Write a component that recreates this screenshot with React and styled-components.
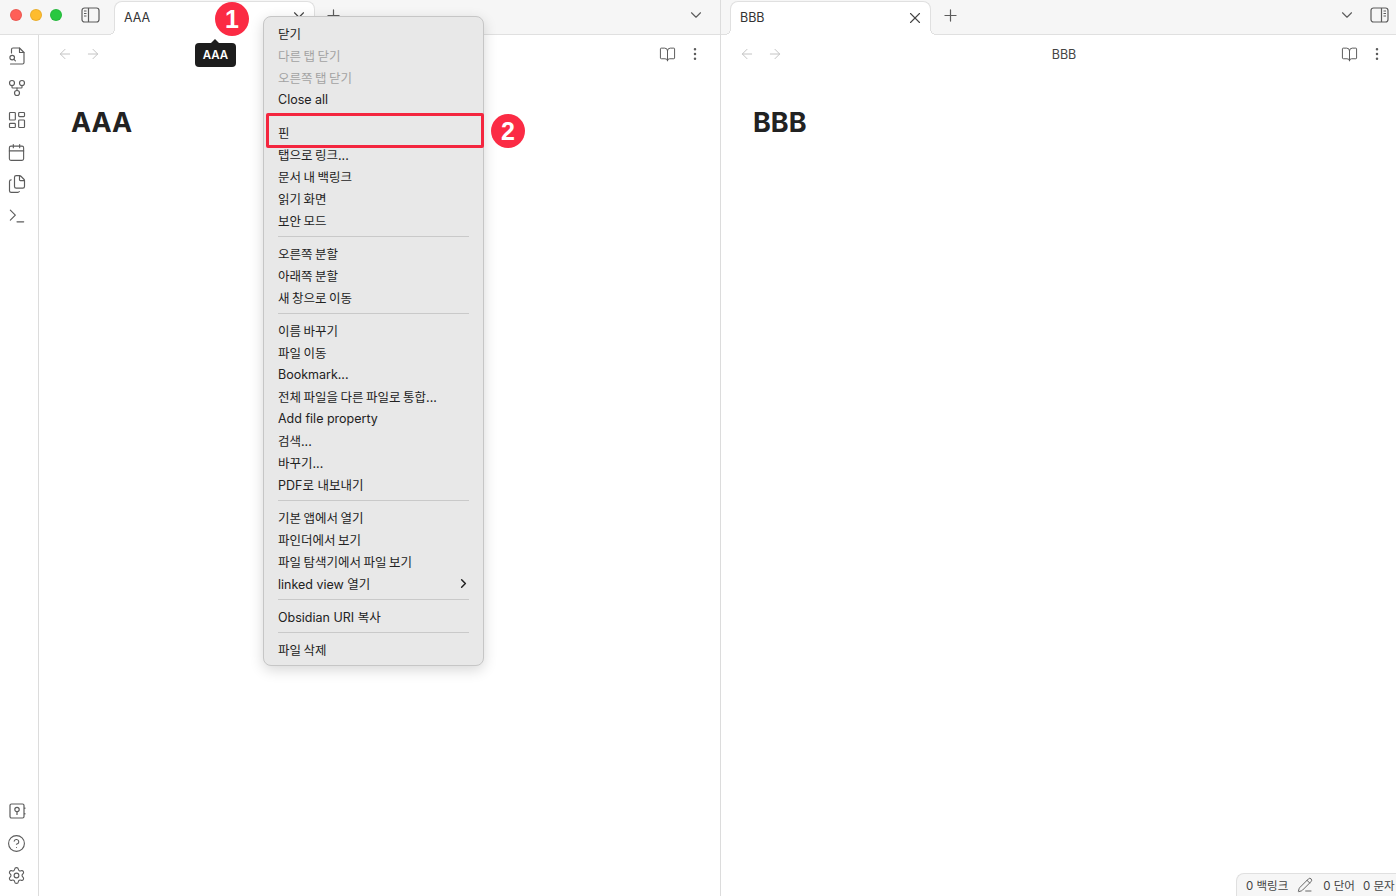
import React from 'react'
import styled, { createGlobalStyle } from 'styled-components'
import {
  ArrowLeft, ArrowRight, BookOpen, Calendar, ChevronDown, ChevronRight, CircleHelp,
  EllipsisVertical, Files, GitFork, LayoutDashboard, PencilLine, Plus,
  Settings, Terminal, X,
} from 'lucide-react'

const GlobalStyle = createGlobalStyle`
  html, body {
    margin: 0;
    height: 100%;
    overflow: hidden;
    background: #fff;
  }
  #root {
    height: 100%;
  }
  * {
    box-sizing: border-box;
  }
`

const Workspace = styled.div`
  position: relative;
  display: flex;
  height: 100%;
  color: #222;
  font-family: Inter, "Noto Sans CJK KR", sans-serif;
  font-size: 13px;
`
const Pane = styled.section`
  display: flex;
  flex-direction: column;
  width: ${({ $width }) => $width || 'auto'};
  flex: ${({ $width }) => ($width ? 'none' : 1)};
  border-right: ${({ $width }) => ($width ? '1px solid #dcdcdc' : 'none')};
`
const TabBar = styled.header`
  display: flex;
  align-items: flex-end;
  flex: none;
  height: 35px;
  padding-left: ${({ $inset }) => $inset || 0}px;
  background: #f6f6f6;
  border-bottom: 1px solid #e0e0e0;
`
const Traffic = styled.div`
  display: flex;
  align-items: center;
  align-self: center;
  gap: 8px;
  margin: -4px 0 0 10px;
`
const Light = styled.span`
  width: 12px;
  height: 12px;
  border-radius: 50%;
  background: ${({ $color }) => $color};
  border: 1px solid rgba(0, 0, 0, 0.08);
`
const BarIcon = styled.button`
  display: flex;
  align-items: center;
  justify-content: center;
  flex: none;
  align-self: center;
  width: ${({ $size }) => $size || 28}px;
  height: 28px;
  margin: -4px ${({ $end }) => $end || 0}px 0 ${({ $gap }) => $gap || 0}px;
  padding: 0;
  border: 0;
  background: none;
  color: #5c5c5c;
`
const Tab = styled.div`
  position: relative;
  display: flex;
  align-items: center;
  justify-content: space-between;
  flex: none;
  width: 201px;
  height: 34px;
  margin: 0 0 -1px ${({ $gap }) => $gap || 0}px;
  padding: 0 6px 2px 9px;
  background: #fff;
  border: 1px solid #e0e0e0;
  border-bottom: 0;
  border-radius: 8px 8px 0 0;
  font-size: 12.5px;
  color: #333;
  &::before,
  &::after {
    content: '';
    position: absolute;
    bottom: 0;
    width: 6px;
    height: 6px;
  }
  &::before {
    left: -6px;
    background: radial-gradient(circle at 0 0, transparent 5px, #e0e0e0 5px, #e0e0e0 6px, #fff 6px);
  }
  &::after {
    right: -6px;
    background: radial-gradient(circle at 100% 0, transparent 5px, #e0e0e0 5px, #e0e0e0 6px, #fff 6px);
  }
`
const TabAction = styled.span`
  display: flex;
  margin-top: ${({ $raised }) => ($raised ? -5 : 0)}px;
  color: #444;
`
const Spacer = styled.div`
  flex: 1;
`
const Body = styled.div`
  display: flex;
  flex: 1;
  min-height: 0;
`
const Ribbon = styled.nav`
  display: flex;
  flex-direction: column;
  justify-content: space-between;
  flex: none;
  width: 39px;
  padding: 5px 5px 5px 0;
  border-right: 1px solid #dcdcdc;
`
const RibbonGroup = styled.div`
  display: flex;
  flex-direction: column;
`
const RibbonIcon = styled.span`
  display: flex;
  align-items: center;
  justify-content: center;
  height: 32px;
  color: #5c5c5c;
`
const View = styled.main`
  display: flex;
  flex-direction: column;
  flex: 1;
  min-width: 0;
`
const ViewHeader = styled.div`
  display: flex;
  align-items: center;
  height: 38px;
  padding: 0 ${({ $end }) => $end}px 0 12px;
`
const NavIcon = styled.span`
  display: flex;
  justify-content: center;
  width: 28px;
  color: ${({ $active }) => ($active ? '#5c5c5c' : '#c4c4c4')};
`
const ViewTitle = styled.div`
  flex: 1;
  padding-left: 4px;
  text-align: center;
  font-size: 12.5px;
  color: #444;
`
const Heading = styled.h1`
  margin: 33px 0 0 32px;
  font-size: 27px;
  line-height: 34px;
  font-weight: 700;
  color: #222;
`
const Menu = styled.div`
  position: absolute;
  left: 263px;
  top: 16px;
  width: 221px;
  padding: 5px 0;
  background: #e8e8e8;
  border: 1px solid #c6c6c6;
  border-radius: 8px;
  box-shadow: 0 4px 14px rgba(0, 0, 0, 0.16);
`
const MenuRow = styled.div`
  display: flex;
  align-items: center;
  justify-content: space-between;
  height: 22px;
  padding: 0 12px 0 14px;
  font-size: 12.5px;
  word-spacing: ${({ $tight }) => ($tight ? '-1px' : 'normal')};
  color: ${({ $disabled }) => ($disabled ? '#a3a3a3' : '#222')};
`
const MenuSep = styled.div`
  display: flex;
  align-items: center;
  height: 11px;
  padding: 0 14px;
  &::before {
    content: '';
    flex: 1;
    height: 1px;
    background: #c9c9c9;
  }
`
const Tooltip = styled.div`
  position: absolute;
  left: 195px;
  top: 43px;
  width: 41px;
  height: 24px;
  display: flex;
  align-items: center;
  justify-content: center;
  background: #1d1d1d;
  border-radius: 4px;
  color: #fff;
  font-size: 11.5px;
  font-weight: 600;
  &::before {
    content: '';
    position: absolute;
    top: -4px;
    left: 16px;
    border: 4px solid transparent;
    border-top: 0;
    border-bottom-color: #1d1d1d;
  }
`
const Badge = styled.div`
  position: absolute;
  left: ${({ $x }) => $x}px;
  top: ${({ $y }) => $y}px;
  width: 34px;
  height: 34px;
  display: flex;
  align-items: center;
  justify-content: center;
  border-radius: 50%;
  background: #fb2b44;
  color: #fff;
  font-family: "Liberation Sans", sans-serif;
  font-size: 25px;
  font-weight: 700;
`
const Highlight = styled.div`
  position: absolute;
  left: 266px;
  top: 113px;
  width: 218px;
  height: 35px;
  border: 3px solid #f4263f;
  border-radius: 2px;
`
const StatusBar = styled.footer`
  position: absolute;
  right: 0;
  bottom: 0;
  display: flex;
  align-items: center;
  height: 23px;
  width: 160px;
  padding-left: 9px;
  background: #f6f6f6;
  border: 1px solid #e0e0e0;
  border-width: 1px 0 0 1px;
  border-top-left-radius: 8px;
  font-size: 11.5px;
  color: #444;
  white-space: nowrap;
`
const StatusPencil = styled.span`
  display: flex;
  margin: 0 10px 0 9px;
  color: #5c5c5c;
`
const StatusGap = styled.span`
  margin-left: 8px;
`

const SidebarToggle = ({ right }) => (
  <svg width="19" height="16" viewBox="0 0 19 16" fill="none" stroke="currentColor" strokeWidth="1.2">
    <rect x="1" y="1" width="17" height="14" rx="2.5" />
    {right ? (
      <path d="M11.5 1v14M13.5 4h2.5M13.5 6.5h2.5M13.5 9h2.5" />
    ) : (
      <path d="M7.5 1v14M3 4h2.5M3 6.5h2.5M3 9h2.5" />
    )}
  </svg>
)

const FileFind = () => (
  <svg width="20" height="20" viewBox="0 0 20 20" fill="none" stroke="currentColor" strokeWidth="1.15" strokeLinecap="round" strokeLinejoin="round">
    <path d="M4.5 7V3.5A1.5 1.5 0 0 1 6 2h6.5L17 6.5V16.5A1.5 1.5 0 0 1 15.5 18H3.5" />
    <path d="M12.5 2v4.5H17" />
    <circle cx="5.2" cy="11.6" r="2.3" />
    <path d="M7 13.4l1.4 1.4" />
  </svg>
)

const VaultIcon = () => (
  <svg width="18" height="18" viewBox="0 0 18 18" fill="none" stroke="currentColor" strokeWidth="1.2">
    <rect x="2" y="2" width="14" height="14" rx="1.5" />
    <circle cx="9" cy="7.5" r="2.2" />
    <path d="M9 9.7V13M16.8 5.5v1.5M16.8 11v1.5" />
  </svg>
)

const ribbonIcon = (Icon, size = 20) => <Icon size={size} strokeWidth={1.4} />

const topIcons = [
  { key: 'search', node: <FileFind /> },
  { key: 'graph', node: ribbonIcon(GitFork) },
  { key: 'canvas', node: ribbonIcon(LayoutDashboard) },
  { key: 'calendar', node: ribbonIcon(Calendar, 19) },
  { key: 'files', node: ribbonIcon(Files, 20) },
  { key: 'terminal', node: ribbonIcon(Terminal, 20) },
]

const menuGroups = [
  [{ label: '닫기' }, { label: '다른 탭 닫기', disabled: true }, { label: '오른쪽 탭 닫기', disabled: true }, { label: 'Close all' }],
  [{ label: '핀' }, { label: '탭으로 링크...' }, { label: '문서 내 백링크' }, { label: '읽기 화면' }, { label: '보안 모드' }],
  [{ label: '오른쪽 분할' }, { label: '아래쪽 분할' }, { label: '새 창으로 이동' }],
  [
    { label: '이름 바꾸기' }, { label: '파일 이동' }, { label: 'Bookmark...' }, { label: '전체 파일을 다른 파일로 통합...' },
    { label: 'Add file property' }, { label: '검색...' }, { label: '바꾸기...' }, { label: 'PDF로 내보내기' },
  ],
  [{ label: '기본 앱에서 열기' }, { label: '파인더에서 보기' }, { label: '파일 탐색기에서 파일 보기' }, { label: 'linked view 열기', submenu: true }],
  [{ label: 'Obsidian URI 복사' }],
  [{ label: '파일 삭제' }],
]

const ViewBar = ({ title, end }) => (
  <ViewHeader $end={end}>
    <NavIcon><ArrowLeft size={16} strokeWidth={1.5} /></NavIcon>
    <NavIcon><ArrowRight size={16} strokeWidth={1.5} /></NavIcon>
    <ViewTitle>{title}</ViewTitle>
    <NavIcon $active><BookOpen size={17} strokeWidth={1.4} /></NavIcon>
    <NavIcon $active><EllipsisVertical size={16} strokeWidth={1.8} /></NavIcon>
  </ViewHeader>
)

const ContextMenu = () => (
  <Menu>
    {menuGroups.map((group, i) => (
      <React.Fragment key={group[0].label}>
        {i > 0 && <MenuSep />}
        {group.map((item) => (
          <MenuRow key={item.label} $disabled={item.disabled} $tight={!/[A-Za-z]/.test(item.label)}>
            {item.label}
            {item.submenu && <ChevronRight size={15} strokeWidth={2.4} />}
          </MenuRow>
        ))}
      </React.Fragment>
    ))}
  </Menu>
)

const App = () => {
  return (
    <>
      <GlobalStyle />
      <Workspace>
        <Pane $width="721px">
          <TabBar>
            <Traffic>
              <Light $color="#ff5f57" />
              <Light $color="#febc2e" />
              <Light $color="#28c840" />
            </Traffic>
            <BarIcon $gap={14}><SidebarToggle /></BarIcon>
            <Tab $gap={10}>
              AAA
              <TabAction $raised><ChevronDown size={18} strokeWidth={1.5} /></TabAction>
            </Tab>
            <BarIcon $gap={4}><Plus size={19} strokeWidth={1.5} /></BarIcon>
            <Spacer />
            <BarIcon $size={30} $end={9}><ChevronDown size={18} strokeWidth={1.5} /></BarIcon>
          </TabBar>
          <Body>
            <Ribbon>
              <RibbonGroup>
                {topIcons.map(({ key, node }) => (
                  <RibbonIcon key={key}>{node}</RibbonIcon>
                ))}
              </RibbonGroup>
              <RibbonGroup>
                <RibbonIcon><VaultIcon /></RibbonIcon>
                <RibbonIcon>{ribbonIcon(CircleHelp, 19)}</RibbonIcon>
                <RibbonIcon>{ribbonIcon(Settings, 19)}</RibbonIcon>
              </RibbonGroup>
            </Ribbon>
            <View>
              <ViewBar title="AAA" end={11} />
              <Heading>AAA</Heading>
            </View>
          </Body>
        </Pane>
        <Pane>
          <TabBar $inset={9}>
            <Tab>
              BBB
              <TabAction><X size={18} strokeWidth={1.5} /></TabAction>
            </Tab>
            <BarIcon $gap={5}><Plus size={19} strokeWidth={1.5} /></BarIcon>
            <Spacer />
            <BarIcon $size={28}><ChevronDown size={18} strokeWidth={1.5} /></BarIcon>
            <BarIcon $size={34} $gap={1}><SidebarToggle right /></BarIcon>
          </TabBar>
          <View>
            <ViewBar title="BBB" end={5} />
            <Heading>BBB</Heading>
          </View>
        </Pane>
        <ContextMenu />
        <Highlight />
        <Tooltip>AAA</Tooltip>
        <Badge $x={215} $y={2}>1</Badge>
        <Badge $x={491} $y={114}>2</Badge>
        <StatusBar>
          0 백링크
          <StatusPencil><PencilLine size={16} strokeWidth={1.4} /></StatusPencil>
          0 단어
          <StatusGap>0 문자</StatusGap>
        </StatusBar>
      </Workspace>
    </>
  )
}

export default App
